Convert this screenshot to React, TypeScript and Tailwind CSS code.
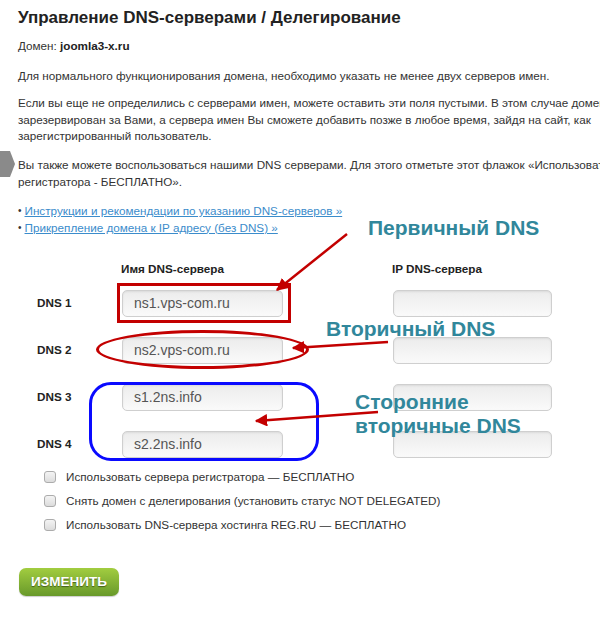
const rows = [
  { label: "DNS 1", name: "ns1.vps-com.ru" },
  { label: "DNS 2", name: "ns2.vps-com.ru" },
  { label: "DNS 3", name: "s1.2ns.info" },
  { label: "DNS 4", name: "s2.2ns.info" },
]

const options = [
  "Использовать сервера регистратора — БЕСПЛАТНО",
  "Снять домен с делегирования (установить статус NOT DELEGATED)",
  "Использовать DNS-сервера хостинга REG.RU — БЕСПЛАТНО",
]

function Field({ value, className }: { value?: string; className?: string }) {
  return (
    <div className={`h-[27px] rounded-[5px] border border-[#cfcfcf] bg-gradient-to-b from-[#ececec] to-[#fafafa] shadow-[inset_0_1px_2px_rgba(0,0,0,0.08)] px-[11px] flex items-center text-[14px] text-[#555] ${className ?? ""}`}>
      {value}
    </div>
  )
}

function Box() {
  return (
    <span className="w-[12px] h-[12px] rounded-[3px] border border-[#acacac] bg-gradient-to-b from-[#f4f4f4] to-[#dcdcdc] shrink-0" />
  )
}

export default function App() {
  return (
    <div className="relative w-[600px] h-[620px] overflow-hidden bg-white text-[#333] font-['Liberation_Sans',Arial,sans-serif] text-[11.7px] leading-[16.5px]">
      {/* left side tab */}
      <svg className="absolute left-0 top-[151px]" width="16" height="26" viewBox="0 0 16 26">
        <polygon points="0,0 10,0 15,13 10,26 0,26" fill="#8a8a8a" />
      </svg>

      <div className="pl-[18px] pt-[7px] whitespace-nowrap">
        <h1 className="text-[17px] leading-[22px] font-bold text-[#222]">Управление DNS-серверами / Делегирование</h1>

        <p className="mt-[9px]">
          Домен: <b className="text-[#222]">joomla3-x.ru</b>
        </p>

        <p className="mt-[13.5px]">Для нормального функционирования домена, необходимо указать не менее двух серверов имен.</p>

        <p className="mt-[10.5px]">
          Если вы еще не определились с серверами имен, можете оставить эти поля пустыми. В этом случае домен будет
          <br />
          зарезервирован за Вами, а сервера имен Вы сможете добавить позже в любое время, зайдя на сайт, как
          <br />
          зарегистрированный пользователь.
        </p>

        <p className="mt-[12.5px]">
          Вы также можете воспользоваться нашими DNS серверами. Для этого отметьте этот флажок «Использовать сервера
          <br />
          регистратора - БЕСПЛАТНО».
        </p>

        <ul className="mt-[13px]">
          <li className="flex items-center gap-[3px]">
            <span className="text-[10px]">•</span>
            <a className="text-[#3b8ccb] underline">Инструкции и рекомендации по указанию DNS-серверов »</a>
          </li>
          <li className="flex items-center gap-[3px]">
            <span className="text-[10px]">•</span>
            <a className="text-[#3b8ccb] underline">Прикрепление домена к IP адресу (без DNS) »</a>
          </li>
        </ul>
      </div>

      {/* DNS form */}
      <div className="mt-[25px] pl-[37px]">
        <div className="flex font-bold text-[#222] leading-[16px]">
          <span className="w-[84px]" />
          <span className="w-[161px]">Имя DNS-сервера</span>
          <span className="ml-[110px]">IP DNS-сервера</span>
        </div>
        <div className="mt-[13px] flex flex-col gap-[20px]">
          {rows.map((r) => (
            <div key={r.label} className="flex items-center">
              <span className="w-[85px] font-bold text-[#222]">{r.label}</span>
              <Field value={r.name} className="w-[161px]" />
              <Field className="w-[159px] ml-[110px]" />
            </div>
          ))}
        </div>
      </div>

      <div className="mt-[11px] pl-[44px] flex flex-col gap-[8px] leading-[16px]">
        {options.map((o) => (
          <label key={o} className="flex items-center gap-[10px] whitespace-nowrap">
            <Box />
            <span>{o}</span>
          </label>
        ))}
      </div>

      <div className="mt-[35px] pl-[19px]">
        <button className="w-[100px] h-[28px] rounded-[7px] bg-gradient-to-b from-[#a2cd40] to-[#68992a] text-white font-bold text-[13.5px] [text-shadow:0_1px_1px_rgba(0,0,0,0.45)] shadow-[0_1px_1px_rgba(0,0,0,0.2)]">
          ИЗМЕНИТЬ
        </button>
      </div>

      {/* annotations */}
      <div className="absolute left-[117px] top-[283px] w-[174px] h-[40px] border-[3px] border-[#c30000]" />
      <div className="absolute left-[96px] top-[330px] w-[213px] h-[39px] rounded-[50%] border-[3px] border-[#c30000]" />
      <div className="absolute left-[89px] top-[382px] w-[230px] h-[79px] rounded-[22px] border-[3px] border-[#0a0aff]" />

      <svg className="absolute inset-0 pointer-events-none" width="600" height="620">
        <defs>
          <marker id="head" viewBox="0 0 10 10" refX="9" refY="5" markerWidth="5" markerHeight="5" orient="auto">
            <path d="M0,0 L10,5 L0,10 z" fill="#c30000" />
          </marker>
        </defs>
        <line x1="347" y1="234" x2="277" y2="290" stroke="#c30000" strokeWidth="2.5" markerEnd="url(#head)" />
        <line x1="388" y1="342" x2="293" y2="348" stroke="#c30000" strokeWidth="2.5" markerEnd="url(#head)" />
        <line x1="378" y1="412" x2="256" y2="421" stroke="#c30000" strokeWidth="2.5" markerEnd="url(#head)" />
      </svg>

      <div className="absolute left-[368px] top-[216px] text-[21px] leading-[24px] font-bold text-[#31879b] whitespace-nowrap">Первичный DNS</div>
      <div className="absolute left-[326px] top-[317px] text-[21px] leading-[24px] font-bold text-[#31879b] whitespace-nowrap">Вторичный DNS</div>
      <div className="absolute left-[355px] top-[390px] text-[21px] leading-[24px] font-bold text-[#31879b] whitespace-nowrap">
        Сторонние
        <br />
        вторичные DNS
      </div>

      {/* faint panel corner */}
      <div className="absolute -left-[20px] top-[560px] w-[40px] h-[80px] rounded-bl-[40px] border-l-2 border-b-2 border-[#e6e6e6]" />
    </div>
  )
}
